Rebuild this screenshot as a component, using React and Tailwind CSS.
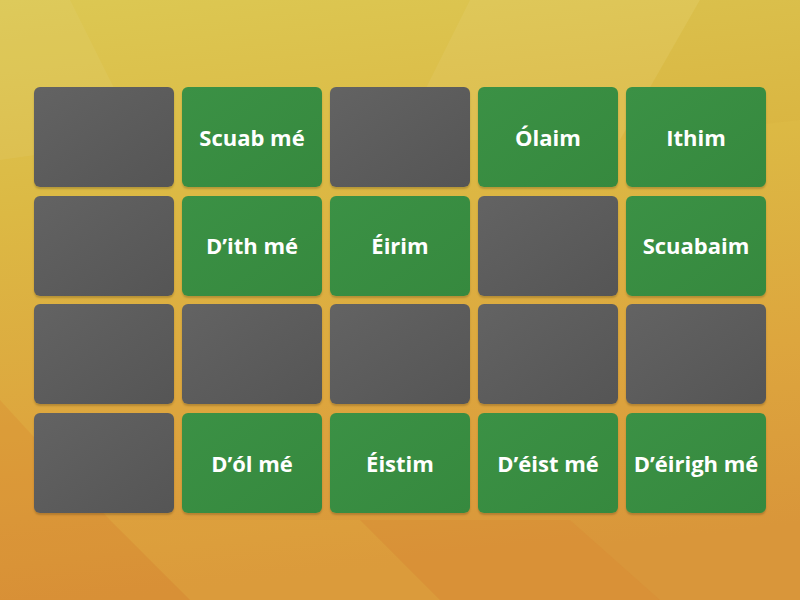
import React from 'react';

const cards = [
  null, 'Scuab mé', null, 'Ólaim', 'Ithim',
  null, 'D’ith mé', 'Éirim', null, 'Scuabaim',
  null, null, null, null, null,
  null, 'D’ól mé', 'Éistim', 'D’éist mé', 'D’éirigh mé',
];

// faceted gradient behind the board
const Backdrop = () => (
  <svg className="absolute inset-0 w-full h-full" viewBox="0 0 800 600" preserveAspectRatio="none">
    <defs>
      <linearGradient id="bg" x1="0" y1="0" x2="0.15" y2="1">
        <stop offset="0" stopColor="#dcc853" />
        <stop offset="0.35" stopColor="#dcb944" />
        <stop offset="0.7" stopColor="#dda63e" />
        <stop offset="1" stopColor="#d9963a" />
      </linearGradient>
    </defs>
    <rect width="800" height="600" fill="url(#bg)" />
    <polygon points="0,0 70,0 140,140 0,160" fill="#ffffff" opacity="0.05" />
    <polygon points="470,0 700,0 620,140 400,140" fill="#ffffff" opacity="0.06" />
    <polygon points="700,0 800,0 800,120 620,140" fill="#c08020" opacity="0.05" />
    <polygon points="0,400 110,520 190,600 0,600" fill="#d9782a" opacity="0.2" />
    <polygon points="360,520 570,520 660,600 440,600" fill="#d9782a" opacity="0.18" />
    <polygon points="110,520 360,520 440,600 190,600" fill="#e8b040" opacity="0.2" />
  </svg>
);

const Card = ({ label }) => {
  if (!label) {
    return (
      <div className="rounded-md bg-gradient-to-br from-[#636363] to-[#555555] shadow-[0_2px_2px_rgba(0,0,0,0.18)]" />
    );
  }
  return (
    <div className="rounded-md bg-gradient-to-br from-[#3b9145] to-[#36893e] shadow-[0_2px_2px_rgba(0,0,0,0.18)] flex items-center justify-center">
      <span className="text-white text-[22px] font-bold" style={{ fontFamily: '"Open Sans", Lato, sans-serif' }}>
        {label}
      </span>
    </div>
  );
};

export default function App() {
  return (
    <div className="relative w-[800px] h-[600px] overflow-hidden">
      <Backdrop />
      <div className="relative pt-[87px] pl-[34px]">
        <div className="grid grid-cols-[repeat(5,140px)] auto-rows-[100px] gap-x-2 gap-y-[8.7px]">
          {cards.map((c, i) => (
            <Card key={i} label={c} />
          ))}
        </div>
      </div>
    </div>
  );
}
